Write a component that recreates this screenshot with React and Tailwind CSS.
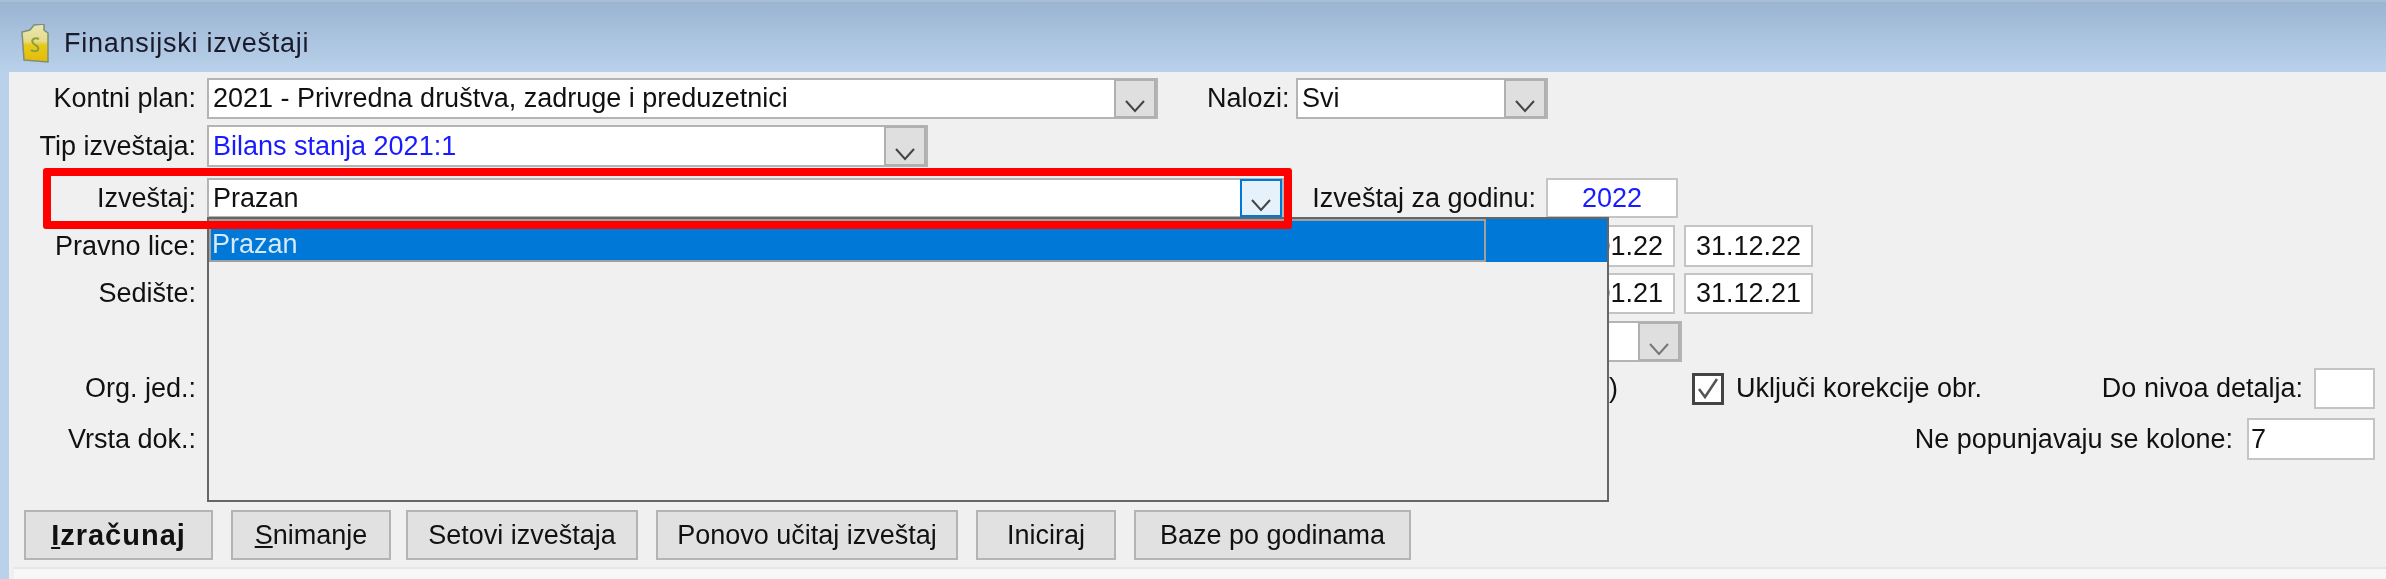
import React from 'react';

function Chevron({ className = 'text-[#444]' }) {
  return (
    <svg className={className} width="22" height="14" viewBox="0 0 22 14" fill="none">
      <path d="M2 2 L11 12 L20 2" stroke="currentColor" strokeWidth="2" />
    </svg>
  );
}

function Label({ children }) {
  return <div className="w-[187px] mr-[11px] shrink-0 text-right whitespace-nowrap text-[#111]">{children}</div>;
}

function Combo({ text, width, color = 'text-[#111]', disabled = false, className = '' }) {
  return (
    <div className={`flex h-full shrink-0 bg-white border-2 border-[#b4b4b4] ${className}`} style={{ width }}>
      <div className={`flex-1 pl-[4px] flex items-center whitespace-nowrap ${color}`}>{text}</div>
      <div className="w-[42px] flex justify-center items-end pb-[3px] bg-[#dfdfdf] border-2 border-[#b0b0b0] -my-[1px]">
        <Chevron className={disabled ? 'text-[#777]' : 'text-[#444]'} />
      </div>
    </div>
  );
}

function Input({ children, width, className = '' }) {
  return (
    <div className={`h-full shrink-0 bg-white border-2 border-[#c4c4c4] flex items-center ${className}`} style={{ width }}>
      {children}
    </div>
  );
}

function Button({ children, width, bold = false, className = '' }) {
  return (
    <div
      className={`h-[50px] shrink-0 flex items-center justify-center bg-[#e1e1e1] border-2 border-[#b4b4b4] text-[#111] ${bold ? 'font-bold text-[29px] tracking-[1px]' : ''} ${className}`}
      style={{ width }}
    >
      {children}
    </div>
  );
}

function FinanceIcon() {
  return (
    <svg width="30" height="40" viewBox="0 0 30 40">
      <defs>
        <linearGradient id="doc" x1="0" y1="0" x2="0" y2="1">
          <stop offset="0" stopColor="#e9e7b4" />
          <stop offset="0.45" stopColor="#e6dc8c" />
          <stop offset="0.55" stopColor="#e8c91a" />
          <stop offset="1" stopColor="#e4bb08" />
        </linearGradient>
      </defs>
      <path d="M2 8 L10 6 L14 1 L24 0 L24 6 L28 9 L28 38 L4 36 Z" fill="url(#doc)" stroke="#7d8f7a" strokeWidth="1.5" />
      <path d="M19 15 C14 13 11 16 13 19 C15 22 20 22 18 26 C16 28 12 27 11 26" fill="none" stroke="#8aa03c" strokeWidth="2" />
    </svg>
  );
}

export default function App() {
  return (
    <div className="w-[2386px] h-[579px] overflow-hidden flex flex-col bg-[#b9d1ea] font-['Liberation_Sans',sans-serif] text-[27px] leading-none blur-[0.6px]">
      {/* Title bar */}
      <div className="h-[72px] shrink-0 flex items-center pl-[20px] pt-[13px] border-t-2 border-[#a9bed6] bg-gradient-to-b from-[#9bb4d2] to-[#b9d1ea]">
        <FinanceIcon />
        <span className="ml-[14px] tracking-[0.75px] text-[#1a1a2a]">Finansijski izveštaji</span>
      </div>

      {/* Body */}
      <div className="relative flex-1 ml-[9px] bg-[#f0f0f0] flex flex-col">
        <div className="flex items-center h-[41px] mt-[6px]">
          <Label>Kontni plan:</Label>
          <Combo text="2021 - Privredna društva, zadruge i preduzetnici" width={951} />
          <span className="ml-[49px] w-[79px] text-right whitespace-nowrap text-[#111]">Nalozi:</span>
          <Combo text="Svi" width={252} className="ml-[10px]" />
        </div>

        <div className="flex items-center h-[42px] mt-[6px]">
          <Label>Tip izveštaja:</Label>
          <Combo text="Bilans stanja 2021:1" width={721} color="text-[#1a1aff]" />
        </div>

        <div className="flex items-center h-[40px] mt-[11px]">
          <Label>Izveštaj:</Label>
          <div className="flex h-full w-[1077px] shrink-0 bg-white border-2 border-[#b4b4b4]">
            <div className="flex-1 pl-[4px] flex items-center text-[#111]">Prazan</div>
            <div className="w-[42px] flex justify-center items-end pb-[3px] bg-[#e5f1fb] border-2 border-[#0078d7] -my-[1px]">
              <Chevron />
            </div>
          </div>
          <span className="ml-[23px] w-[229px] text-right whitespace-nowrap text-[#111]">Izveštaj za godinu:</span>
          <Input width={132} className="ml-[10px] justify-center text-[#1a1aff]">2022</Input>
        </div>

        <div className="flex items-center h-[42px] mt-[7px]">
          <Label>Pravno lice:</Label>
          <Input width={129} className="ml-[1339px] justify-center text-[#111]">01.01.22</Input>
          <Input width={129} className="ml-[9px] justify-center text-[#111]">31.12.22</Input>
        </div>

        <div className="flex items-center h-[41px] mt-[6px]">
          <Label>Sedište:</Label>
          <Input width={129} className="ml-[1339px] justify-center text-[#111]">01.01.21</Input>
          <Input width={129} className="ml-[9px] justify-center text-[#111]">31.12.21</Input>
        </div>

        <div className="flex items-center h-[41px] mt-[7px]">
          <div className="w-[198px] shrink-0" />
          <Combo text="" width={200} disabled className="ml-[1275px]" />
        </div>

        <div className="flex items-center h-[41px] mt-[6px] pr-[11px]">
          <Label>Org. jed.:</Label>
          <span className="ml-[1402px] w-[83px] shrink-0 text-[#111]">)</span>
          <div className="w-[32px] h-[32px] shrink-0 bg-white border-[3px] border-[#444] flex items-center justify-center">
            <svg width="24" height="24" viewBox="0 0 24 24" fill="none">
              <path d="M3 12 L9 20 L21 2" stroke="#555" strokeWidth="2.5" />
            </svg>
          </div>
          <span className="ml-[12px] whitespace-nowrap text-[#111]">Uključi korekcije obr.</span>
          <span className="ml-auto mr-[11px] whitespace-nowrap text-[#111]">Do nivoa detalja:</span>
          <Input width={61} />
        </div>

        <div className="flex items-center h-[42px] mt-[9px] pr-[11px]">
          <Label>Vrsta dok.:</Label>
          <span className="ml-auto mr-[14px] whitespace-nowrap text-[#111]">Ne popunjavaju se kolone:</span>
          <Input width={128} className="pl-[2px] text-[#111]">7</Input>
        </div>

        {/* Action buttons */}
        <div className="flex mt-[50px] pl-[15px]">
          <Button width={189} bold>
            <span><span className="underline underline-offset-2">I</span>zračunaj</span>
          </Button>
          <Button width={160} className="ml-[18px]">
            <span><span className="underline underline-offset-2">S</span>nimanje</span>
          </Button>
          <Button width={232} className="ml-[15px]">Setovi izveštaja</Button>
          <Button width={302} className="ml-[18px]">Ponovo učitaj izveštaj</Button>
          <Button width={140} className="ml-[18px]">Iniciraj</Button>
          <Button width={277} className="ml-[18px]">Baze po godinama</Button>
        </div>

        {/* Status strip */}
        <div className="flex-1 mt-[7px] ml-[5px] bg-[#f7f7f7] border-t-2 border-[#e6e6e6]" />

        {/* Open dropdown list */}
        <div className="absolute left-[198px] top-[145px] w-[1402px] h-[285px] z-10 bg-[#f0f0f0] border-2 border-[#666]">
          <div className="h-[43px] bg-[#0078d7] flex items-center text-[#d6e9f8]">
            <div className="h-full w-[1277px] border-2 border-[#a0a0a0] pl-[1px] flex items-center pt-[8px]">Prazan</div>
          </div>
        </div>

        {/* Red highlight */}
        <div className="absolute left-[34px] top-[96px] w-[1249px] h-[61px] z-20 border-[8px] border-[#ff0000] rounded-[3px]" />
      </div>
    </div>
  );
}
